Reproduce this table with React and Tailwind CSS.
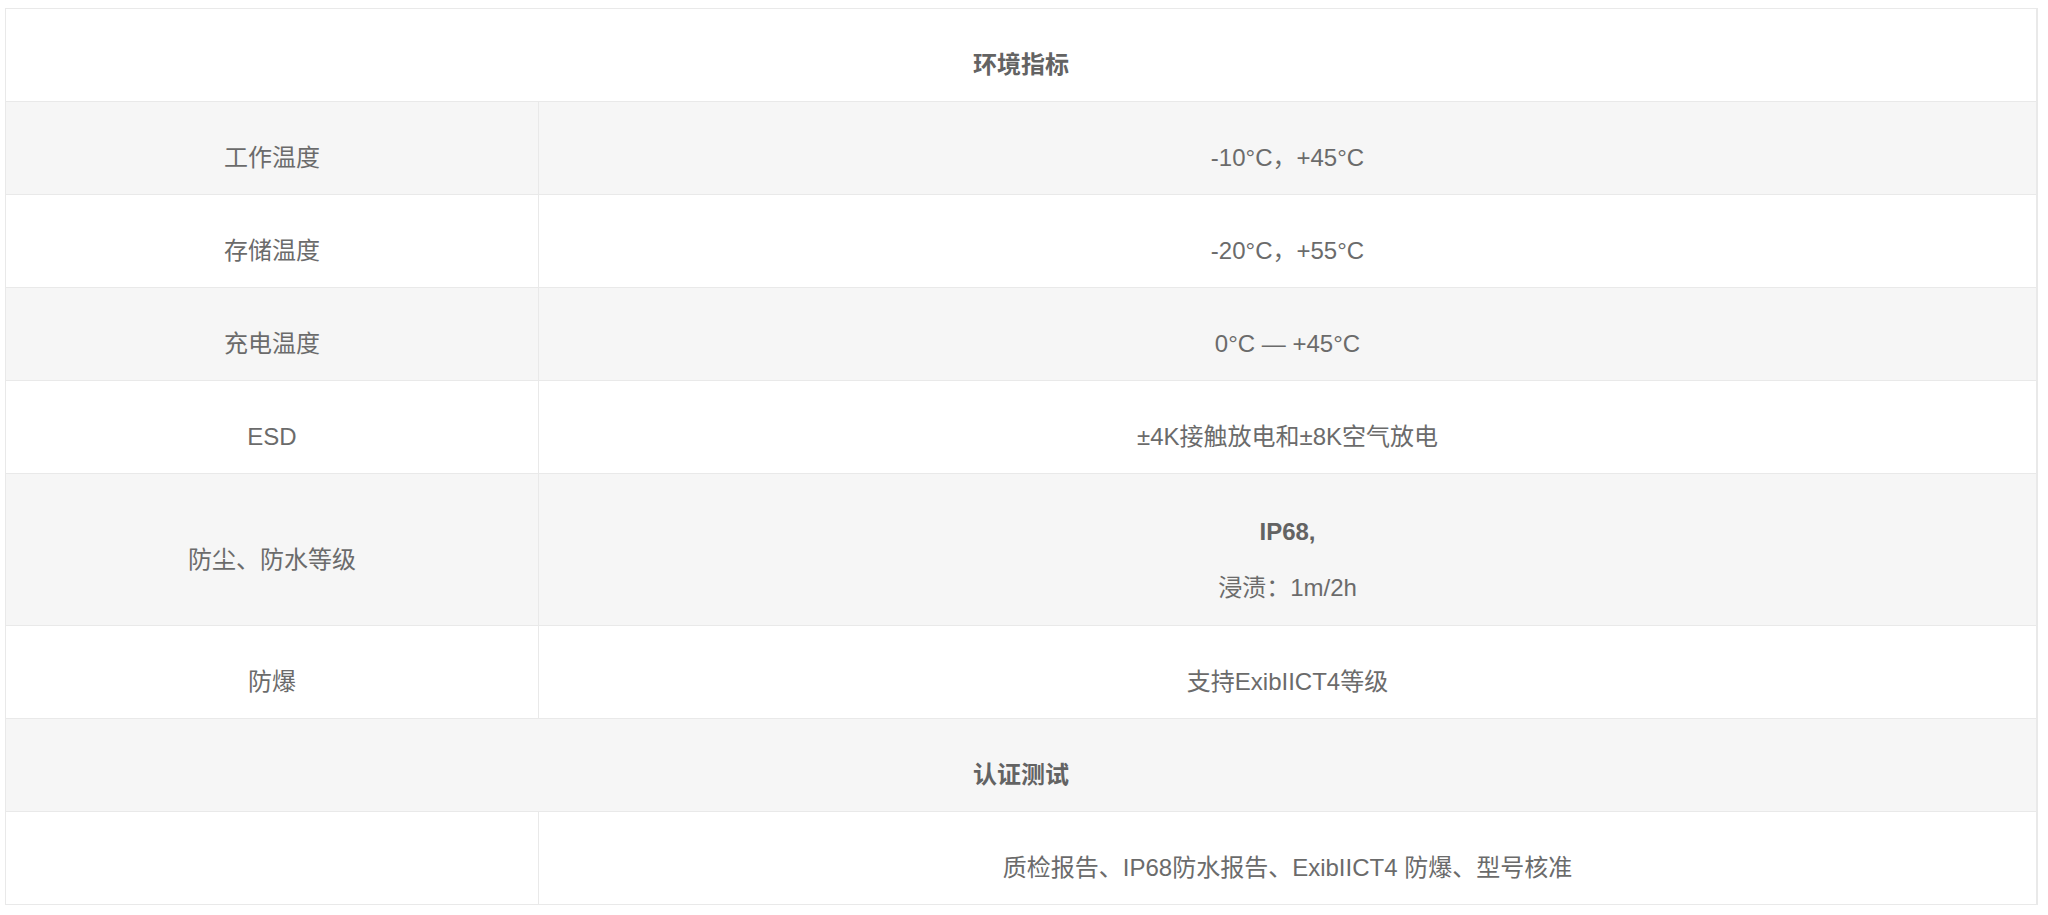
import React from 'react';

const rows = [
  { type: 'section', label: '环境指标' },
  { label: '工作温度', value: '-10°C，+45°C' },
  { label: '存储温度', value: '-20°C，+55°C' },
  { label: '充电温度', value: '0°C — +45°C' },
  { label: 'ESD', value: '±4K接触放电和±8K空气放电' },
  { label: '防尘、防水等级', value: 'ip68' },
  { label: '防爆', value: '支持ExibIICT4等级' },
  { type: 'section', label: '认证测试' },
  { label: '', value: '质检报告、IP68防水报告、ExibIICT4 防爆、型号核准' },
];

const App = () => {
  return (
    <div
      className="bg-white min-h-[915px] pt-[8px] pl-[5px]"
      style={{ fontFamily: '"Liberation Sans", "Noto Sans CJK SC", sans-serif' }}
    >
      <table className="w-[2033px] border-collapse border border-r-2 border-[#e9e9e9] text-[24px] text-[#6b6b6b]">
        <tbody>
          {rows.map((row, i) => {
            const bg = i % 2 === 0 ? 'bg-white' : 'bg-[#f6f6f6]';
            if (row.type === 'section') {
              return (
                <tr key={i} className={bg}>
                  <td colSpan={2} className="h-[93px] border border-[#e9e9e9] pt-[20px] text-center align-middle font-bold text-[#636363]">
                    {row.label}
                  </td>
                </tr>
              );
            }
            return (
              <tr key={i} className={bg}>
                <td className={`w-[533px] border border-[#e9e9e9] pt-[20px] text-center align-middle ${row.value === 'ip68' ? 'h-[152px]' : 'h-[93px]'}`}>
                  {row.label}
                </td>
                <td className="border border-[#e9e9e9] pt-[20px] text-center align-middle">
                  {row.value === 'ip68' ? (
                    <div className="flex flex-col items-center gap-[24px] leading-[32px]">
                      <p className="font-bold text-[#636363]">IP68,</p>
                      <p>浸渍：1m/2h</p>
                    </div>
                  ) : (
                    row.value
                  )}
                </td>
              </tr>
            );
          })}
        </tbody>
      </table>
    </div>
  );
};

export default App;
